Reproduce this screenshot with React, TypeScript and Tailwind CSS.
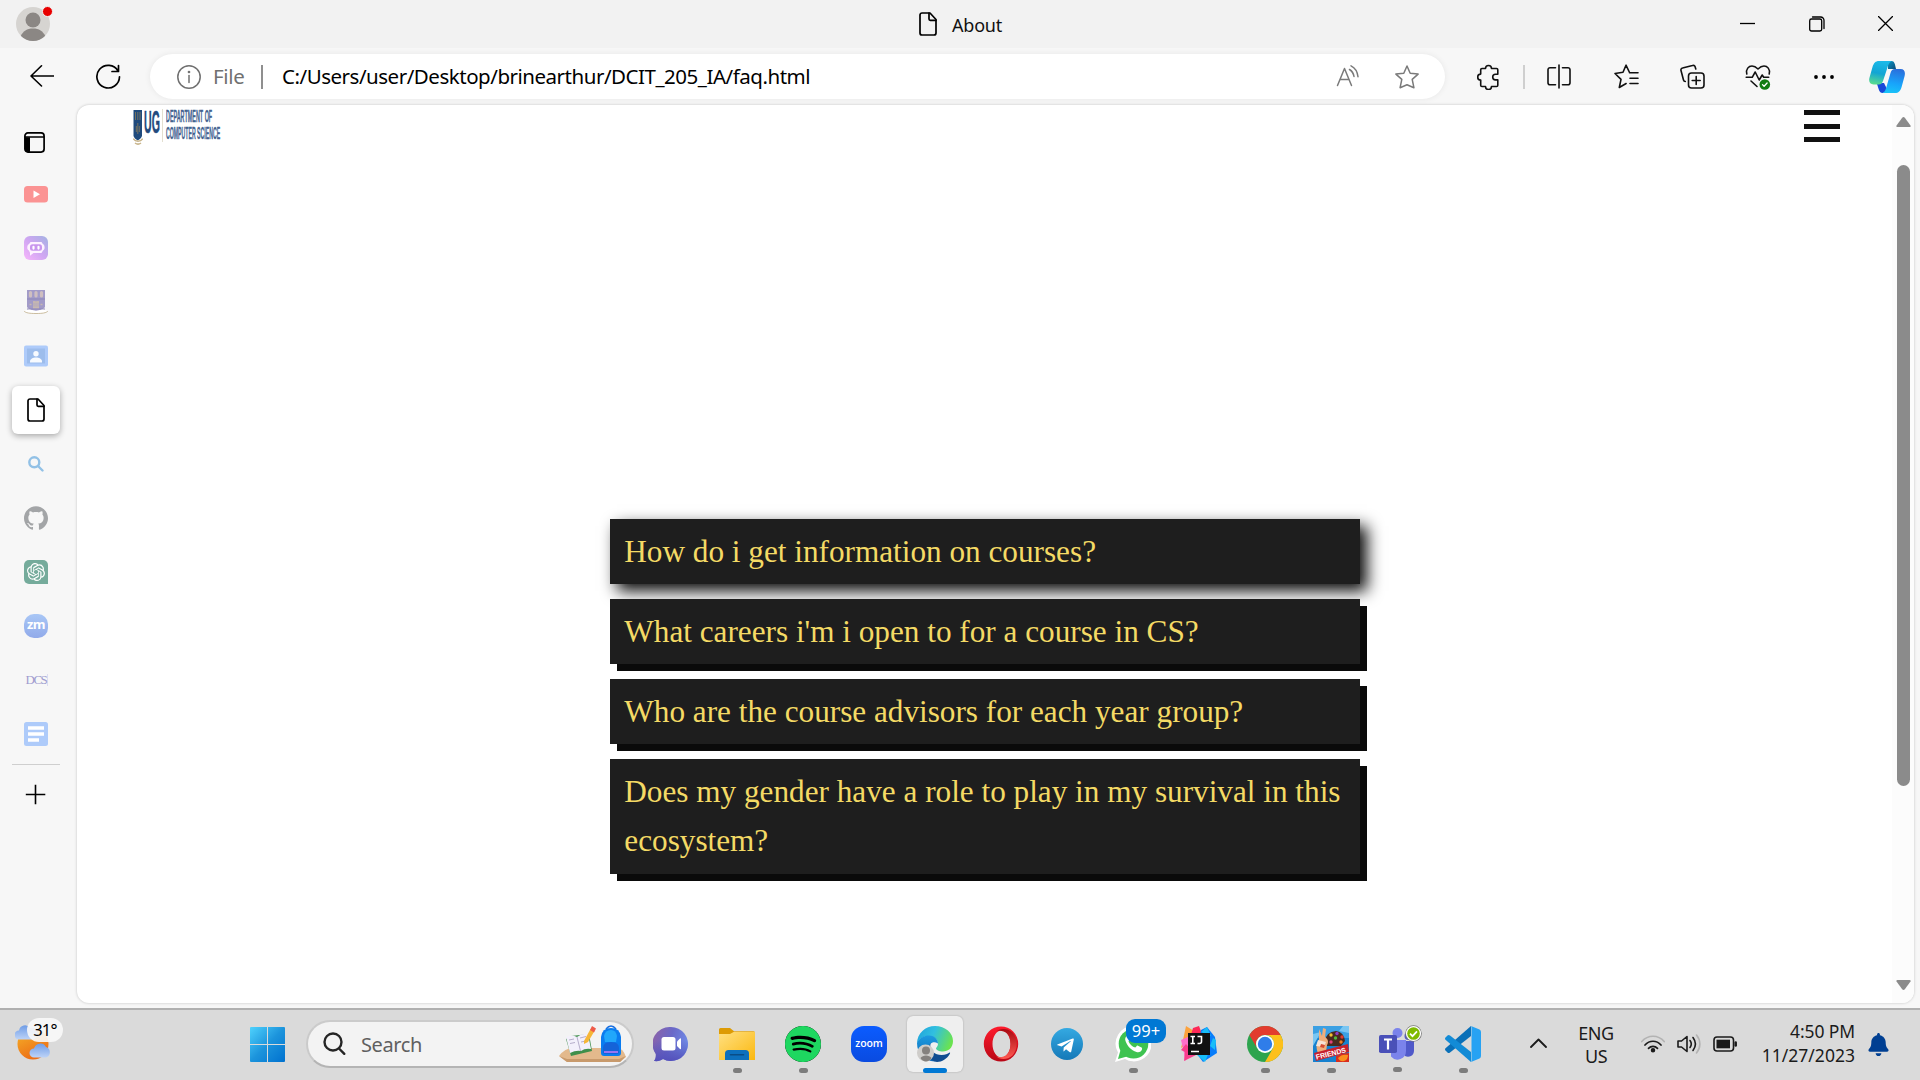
import type { ReactNode } from "react";
import { SiGithub, SiOpenai, SiSpotify } from "react-icons/si";
import { FaBell, FaTelegramPlane } from "react-icons/fa";

const ui = "font-['Noto_Sans','Open_Sans',sans-serif]";

type LineProps = { w: number; h: number; className?: string; sw?: number; children: ReactNode };

function Line({ w, h, className = "", sw = 1.6, children }: LineProps) {
  return (
    <svg
      width={w}
      height={h}
      viewBox={`0 0 ${w} ${h}`}
      fill="none"
      stroke="currentColor"
      strokeWidth={sw}
      strokeLinecap="round"
      strokeLinejoin="round"
      className={`block shrink-0 ${className}`}
    >
      {children}
    </svg>
  );
}

function DocIcon({ className = "" }: { className?: string }) {
  return (
    <Line w={18} h={24} className={className} sw={1.7}>
      <path d="M3 1h8l6 6.5V21a2 2 0 0 1-2 2H3a2 2 0 0 1-2-2V3a2 2 0 0 1 2-2z" />
      <path d="M10 1v6a1.3 1.3 0 0 0 1.3 1.3H17" />
    </Line>
  );
}

function TitleBar() {
  return (
    <header className="flex h-12 shrink-0 items-start bg-[#f2f2f2]">
      <div className="relative ml-4 mt-[7px] h-[34px] w-[34px]">
        <svg width="34" height="34" viewBox="0 0 34 34">
          <defs>
            <clipPath id="avatar">
              <circle cx="17" cy="17" r="17" />
            </clipPath>
          </defs>
          <circle cx="17" cy="17" r="17" fill="#d6d4d1" />
          <g clipPath="url(#avatar)" fill="#8b8784">
            <circle cx="17" cy="13" r="7.5" />
            <path d="M4.500 29.500C7 24 11 21.500 17 21.500s10 2.500 12.500 8L24 36H10z" />
          </g>
        </svg>
        <span className="absolute -top-[1px] left-[25.500px] h-[11px] w-[11px] rounded-full border border-[#f2f2f2] bg-[#e80000]" />
      </div>
      <DocIcon className="ml-[869px] mt-3" />
      <span className={`ml-[15px] mt-[12px] w-[60px] text-[18px] leading-[26px] tracking-[-0.2px] text-[#111] ${ui}`}>About</span>
      <Line w={15} h={15} sw={1.3} className="ml-[728px] mt-4 text-black">
        <path d="M0 7.500h15" strokeLinecap="butt" />
      </Line>
      <Line w={16} h={16} sw={1.3} className="ml-[54px] mt-[15.500px] text-black">
        <rect x=".7" y="3" width="12" height="12" rx="1.800" />
        <path d="M3.500 1h8A3.300 3.300 0 0 1 15 4.500v8" />
      </Line>
      <Line w={15} h={15} sw={1.3} className="ml-[53px] mt-4 text-black">
        <path d="M.5.5l14 14M14.500.5l-14 14" />
      </Line>
    </header>
  );
}

function Copilot() {
  return (
    <svg width="36" height="32" viewBox="0 0 36 32" className="block shrink-0">
      <defs>
        <linearGradient id="cpa" x1=".4" y1="0" x2=".2" y2="1">
          <stop offset="0" stopColor="#1bb9e8" />
          <stop offset=".5" stopColor="#12a5d4" />
          <stop offset="1" stopColor="#5ddf8b" />
        </linearGradient>
        <linearGradient id="cpb" x1=".6" y1="0" x2=".4" y2="1">
          <stop offset="0" stopColor="#2a6fdc" />
          <stop offset=".6" stopColor="#18a4fb" />
          <stop offset="1" stopColor="#19c2f8" />
        </linearGradient>
        <linearGradient id="cpc" x1="0" y1="0" x2="1" y2="1">
          <stop offset="0" stopColor="#0c96c4" />
          <stop offset="1" stopColor="#0b4a78" />
        </linearGradient>
      </defs>
      <path d="M19 0h3.500c3 0 3.500 3 4.500 8h-8z" fill="url(#cpc)" />
      <path d="M9 22h6l3 6c-1 3-2.500 4-4.500 4C10 32 9.500 27 8 23z" fill="#1748d8" />
      <path d="M10 0h13c-3 1-4 4-5 8l-4 12c-.8 2.500-2 3.500-4.500 3.500H4.500C1 23.500-.5 21 .4 17L3.500 6C4.800 2 6.500 0 10 0z" fill="url(#cpa)" />
      <path d="M26 8h5.500C35.500 8 36.500 11 35.600 15l-3 11c-1.300 4-3 6-6.600 6H13.500c2.500-1 3.500-4 4.500-8l3.500-12c.8-2.800 2-4 4.500-4z" fill="url(#cpb)" />
    </svg>
  );
}

function Toolbar() {
  return (
    <div className="flex h-[57px] shrink-0 items-start bg-[#f7f7f7] text-[#111]">
      <Line w={24} h={24} className="ml-[30px] mt-4 text-black">
        <path d="M1 12h22.500M11.500 1.800L1 12l10.500 10" />
      </Line>
      <Line w={26} h={26} className="ml-[42px] mt-[15.500px] text-black" sw={1.7}>
        <path d="M23.500 12.800A11.300 11.300 0 1 1 22 7M22.500 1.500v6h-6.500" />
      </Line>
      <div className="ml-[28px] mt-[6px] flex h-[45px] w-[1295px] items-start rounded-full bg-white shadow-[0_0_6px_rgba(0,0,0,0.07)]">
        <Line w={24} h={24} className="ml-[27px] mt-[10.500px] text-[#707070]" sw={1.5}>
          <circle cx="12" cy="12" r="11.200" />
          <path d="M12 10.500v7" />
          <circle cx="12" cy="7" r=".6" fill="currentColor" />
        </Line>
        <span className={`ml-[12px] mt-[8px] w-[34px] whitespace-nowrap text-[20.500px] leading-[28px] tracking-[-0.300px] text-[#717171] ${ui}`}>File</span>
        <span className="ml-[14px] mt-[11px] h-6 w-[2px] bg-[#8f8f8f]" />
        <span className={`ml-[19px] mt-[8px] w-[700px] whitespace-nowrap text-[20.500px] leading-[28px] tracking-[-0.475px] text-black ${ui}`}>
          C:/Users/user/Desktop/brinearthur/DCIT_205_IA/faq.html
        </span>
        <Line w={24} h={22} className="ml-[354px] mt-[11px] text-[#7a7a7a]" sw={1.5}>
          <path d="M1.500 20.500L8.500 3.500l7 17M4 14.500h9" />
          <path d="M13.500 4.500c2.500 1.500 4 4 4.500 7M15 .8c4 2 6.500 6 7 11" />
        </Line>
        <Line w={24} h={24} className="ml-[35px] mt-[11px] text-[#7a7a7a]" sw={1.5}>
          <path d="M12 1l3.200 7.200 7.900.9-5.900 5.300 1.700 8.300-6.900-3-6.900 3 1.700-8.300L.9 9.100l7.900-.9z" />
        </Line>
      </div>
      <Line w={22} h={26} className="ml-[31.500px] mt-4">
        <path d="M5 4.500h3.500a3 3 0 0 1 6 0h5c.8 0 1.300.5 1.300 1.300v4.500h-2.300a2.800 2.800 0 0 0 0 5.600h2.300v5.300c0 .8-.5 1.300-1.300 1.300h-5a3 3 0 0 1-6 0H5c-.8 0-1.300-.5-1.300-1.300v-5.100a3 3 0 0 1 0-6V5.800C3.700 5 4.200 4.500 5 4.500z" />
      </Line>
      <span className="ml-[24.500px] mt-[17px] h-6 w-[2px] bg-[#cfcfcf]" />
      <Line w={24} h={25} className="ml-[22px] mt-4">
        <path d="M8.500 3.700H3A2 2 0 0 0 1 5.700v13a2 2 0 0 0 2 2h5.500M15.500 3.700H21a2 2 0 0 1 2 2v13a2 2 0 0 1-2 2h-5.500M12 1v23" />
      </Line>
      <Line w={25} h={25} className="ml-[42.500px] mt-4">
        <path d="M15.300 8L12 1.200 9 8.300l-8 1.200 6 5.800L5.300 23.500l6.800-4M15.500 8.800H24M16 14.200h8M16 19.500h8" />
      </Line>
      <Line w={25} h={25} className="ml-[41px] mt-4">
        <rect x="8.500" y="9" width="15.500" height="15" rx="3" />
        <path d="M16.200 12.500v8M12.200 16.500h8M15.800 5l-.7-2.200A2 2 0 0 0 12.500 1.500L2.500 4A2 2 0 0 0 1 6.500l2.500 9.500a2 2 0 0 0 1.800 1.500" />
      </Line>
      <svg width="26" height="26" viewBox="0 0 26 26" className="ml-[40.500px] mt-4 block shrink-0" fill="none" stroke="#111" strokeWidth="1.600" strokeLinecap="round" strokeLinejoin="round">
        <path d="M1.800 10C.5 5 3.800 2 7 2c2.800 0 4.500 1.500 6 3 1.500-1.500 3.200-3 6-3 3.200 0 6.500 3 5.200 8M1.200 13.300h6l3-5.300 4 8 3-5 1.500 2.300h5M6 17l6 5.500" />
        <circle cx="19.800" cy="20.500" r="5.300" fill="#107c10" stroke="none" />
        <path d="M17.500 20.600l1.600 1.600 3-3.200" stroke="#fff" strokeWidth="1.300" />
      </svg>
      <svg width="20" height="4" viewBox="0 0 20 4" className="ml-[43px] mt-[27px] block shrink-0">
        <circle cx="2" cy="2" r="1.900" />
        <circle cx="10" cy="2" r="1.900" />
        <circle cx="18" cy="2" r="1.900" />
      </svg>
      <div className="ml-[35px] mt-[13px]">
        <Copilot />
      </div>
    </div>
  );
}

function Slot({ children }: { children: ReactNode }) {
  return <div className="flex h-[54px] w-12 shrink-0 items-center justify-center">{children}</div>;
}

function Sidebar() {
  return (
    <aside className="flex w-[77px] shrink-0 flex-col bg-[#f7f7f7] pl-3 pt-[11px]">
      <div className="flex h-[51px] w-[45px] items-center justify-center">
        <svg width="21" height="21" viewBox="0 0 21 21" className="mt-px block">
          <rect x=".9" y=".9" width="19.200" height="19.200" rx="3" fill="none" stroke="#000" strokeWidth="1.700" />
          <path d="M1 5.300h5V20H4a3 3 0 0 1-3-3z" />
          <path d="M1 5h19" stroke="#000" strokeWidth="1.500" />
        </svg>
      </div>
      <Slot>
        <svg width="24" height="17" viewBox="0 0 24 17">
          <rect width="24" height="16.500" rx="3.500" fill="#fb9393" />
          <path d="M9.500 4.500v7.500l6.500-3.750z" fill="#fff" />
        </svg>
      </Slot>
      <Slot>
        <svg width="24" height="24" viewBox="0 0 24 24">
          <defs>
            <linearGradient id="poe" x1="0" y1="1" x2="1" y2="0">
              <stop offset="0" stopColor="#f7b5fb" />
              <stop offset=".5" stopColor="#cfa6f2" />
              <stop offset="1" stopColor="#a3b3e2" />
            </linearGradient>
          </defs>
          <rect width="24" height="24" rx="6" fill="url(#poe)" />
          <path d="M6.500 6h11l1.500 2.300c2 .4 2.300 5.700 0 6.300L17.500 17H9.500L6 19.800v-3L4.900 14.600c-2.300-.6-2-5.900 0-6.300z" fill="#fdf2ff" />
          <rect x="6" y="8.200" width="12" height="6.600" rx="2.500" fill="#c996ee" />
          <path d="M9.500 10.800v1.800M14.500 10.800v1.800" stroke="#fff" strokeWidth="2.200" strokeLinecap="round" />
        </svg>
      </Slot>
      <Slot>
        <svg width="24" height="24" viewBox="0 0 24 24">
          <path d="M3 0h18v17c-2 3-6 3-9 4-3-1-7-1-9-4z" fill="#a29bc8" />
          <path d="M3 9h18M3 19h18" stroke="#8e87b8" strokeWidth="1" />
          <path d="M6.500 2.500v3.500M12 2.500v3.500M17.500 2.500v3.500" stroke="#cfbfc0" strokeWidth="3.200" strokeLinecap="round" />
          <path d="M9 12h6M5.500 14.500h2M16.500 14.500h2M9 17.500h6M10 11v7M14 11v7M12 12v6" stroke="#c8b9b0" strokeWidth="1.400" />
          <path d="M.5 20.500c3.500 0 4.500-1 6.500-.5 3 1 7 1 10 0 2-.5 3 .5 6.500.5l-2 2c-6 1.500-13 1.500-19 0z" fill="#fff" />
          <path d="M0 21c1.500 2 6 2.500 12 2.500S22.500 23 24 21" fill="none" stroke="#cbbd9f" strokeWidth="1" />
        </svg>
      </Slot>
      <Slot>
        <svg width="24" height="22" viewBox="0 0 24 22">
          <rect width="24" height="21" y=".5" rx="2" fill="#aecbfa" />
          <rect x="3" y="3.500" width="18" height="15" fill="#9dbdec" />
          <circle cx="12" cy="8.800" r="2.700" fill="#f8fbff" />
          <path d="M6 17.500v-1c0-2.500 3-4 6-4s6 1.500 6 4v1z" fill="#f8fbff" />
        </svg>
      </Slot>
      <div className="my-[3px] flex h-12 w-12 shrink-0 items-center justify-center rounded-md bg-white text-black shadow-[0_2px_6px_rgba(0,0,0,0.32)]">
        <DocIcon />
      </div>
      <Slot>
        <svg width="16" height="16" viewBox="0 0 16 16" fill="none" stroke="#92c1e6" strokeWidth="2.400" strokeLinecap="round">
          <circle cx="6.300" cy="6.300" r="5" />
          <path d="M10 10l4.500 4.500" />
        </svg>
      </Slot>
      <Slot>
        <SiGithub size={24} color="#a3a5a7" />
      </Slot>
      <Slot>
        <div className="flex h-6 w-6 items-center justify-center rounded-[5px] rounded-br-none bg-[#75ab9b]">
          <SiOpenai size={18} color="#fff" />
        </div>
      </Slot>
      <Slot>
        <div className="flex h-6 w-6 items-center justify-center rounded-[10px] bg-linear-to-b from-[#a9c7f6] to-[#91aaea]">
          <span className="pb-[3px] font-['Open_Sans',sans-serif] text-[13px] leading-none font-bold tracking-[-0.500px] text-white">zm</span>
        </div>
      </Slot>
      <Slot>
        <div className="ml-px flex items-center border-r border-[#dedcf0] font-['Liberation_Serif',serif] text-[13px] leading-[12px] tracking-[-1.500px] text-[#9f9ccf]">
          <span className="w-[21px]">DCS</span>
        </div>
      </Slot>
      <Slot>
        <svg width="24" height="24" viewBox="0 0 24 24">
          <rect width="24" height="24" rx="2.500" fill="#aecbfa" />
          <path d="M4 4.200h16v3.600H4zM4 10.200h16v3.600H4zM4 16.200h11v3.600H4z" fill="#fff" />
        </svg>
      </Slot>
      <div className="mt-[3px] h-px w-12 bg-[#cfcfcf]" />
      <Line w={21} h={21} sw={1.6} className="ml-[13px] mt-[19px] text-black">
        <path d="M10.500.8v19.500M.8 10.500h19.500" strokeLinecap="butt" />
      </Line>
    </aside>
  );
}

function DepartmentLogo() {
  return (
    <div className="flex h-[37px] items-start font-['Liberation_Sans',sans-serif] font-bold">
      <svg width="10" height="37" viewBox="0 0 10 37" className="block shrink-0">
        <path d="M.5 2h8.500v26c-1 3-3 3.500-4.200 4.500C3.500 31.500 1.500 31 .5 28z" fill="#1f4a7c" />
        <path d="M2.500 4v8M4.800 4v8M7 4v8M4.800 15v11M3.300 18v6M6.300 18v6" stroke="#8b7c58" strokeWidth=".8" />
        <path d="M.3 30.500C2 34 8 34 9.700 30.500M2 35c2 1.500 4 1.500 6 0" stroke="#c8b48a" strokeWidth="1.500" fill="none" />
      </svg>
      <div className="mt-[2px] w-[17px] pl-px">
        <div className="w-max origin-top-left scale-x-[0.330] text-[32px] leading-[25px] text-[#234a7d] [-webkit-text-stroke:0.500px_#234a7d]">UG</div>
      </div>
      <div className="ml-[2px] mt-px h-[33px] w-px bg-[#e3dfd0]" />
      <div className="ml-[3px] mt-[2px] w-[56px] whitespace-nowrap text-[16px] text-[#42628f]">
        <div className="h-[17px] w-max origin-top-left scale-x-[0.338] leading-[14px] [-webkit-text-stroke:0.300px_#42628f]">DEPARTMENT OF</div>
        <div className="h-[17px] w-max origin-top-left scale-x-[0.324] leading-[14px] [-webkit-text-stroke:0.300px_#42628f]">COMPUTER SCIENCE</div>
      </div>
    </div>
  );
}

const questions = [
  "How do i get information on courses?",
  "What careers i'm i open to for a course in CS?",
  "Who are the course advisors for each year group?",
  "Does my gender have a role to play in my survival in this ecosystem?",
];

function FaqPage() {
  return (
    <main className="flex h-[898px] w-[1837px] shrink-0 overflow-hidden rounded-xl bg-white shadow-[0_0_3px_rgba(0,0,0,0.22)]">
      <div className="flex flex-1 flex-col">
        <div className="flex h-[40px] items-start justify-between pl-[56px] pr-[52px] pt-[3px]">
          <DepartmentLogo />
          <div className="mt-[2px] flex flex-col gap-[8.500px]">
            <span className="h-[5px] w-9 bg-[#111]" />
            <span className="h-[5px] w-9 bg-[#111]" />
            <span className="h-[5px] w-9 bg-[#111]" />
          </div>
        </div>
        <ul className="ml-[533px] mt-[374px] flex w-[750px] flex-col gap-[15px] font-['Liberation_Serif',serif] text-[31.250px] leading-[49px] tracking-[-0.012px] text-[#f4da65]">
          {questions.map((q, i) => (
            <li
              key={q}
              className={`relative bg-[#1e1e1e] pb-[7px] pl-[14.300px] pr-[10px] pt-[8.400px] ${
                i === 0 ? "h-[65px] shadow-[7px_7px_15px_#0a0a0a]" : i === 3 ? "h-[115px] shadow-[7px_7px_0_#0a0a0a]" : "h-[65px] shadow-[7px_7px_0_#0a0a0a]"
              }`}
            >
              {q}
            </li>
          ))}
        </ul>
      </div>
      <div className="flex w-[22px] flex-col bg-[#fcfcfc] pl-1">
        <svg width="15" height="10" viewBox="0 0 15 10" className="mt-3 block" fill="#8b8b8b">
          <path d="M6 1Q7.500-.8 9 1l5.500 7.500Q15 10 13.500 10h-12Q0 10 .5 8.500z" />
        </svg>
        <div className="ml-px mt-[38px] h-[621px] w-[13px] rounded-full bg-[#8b8b8b]" />
        <svg width="15" height="10" viewBox="0 0 15 10" className="mt-[194px] block" fill="#8b8b8b">
          <path d="M6 9Q7.500 10.800 9 9l5.500-7.500Q15 0 13.500 0h-12Q0 0 .5 1.500z" />
        </svg>
      </div>
    </main>
  );
}

function AppSlot({ children, running, active }: { children: ReactNode; running?: boolean; active?: boolean }) {
  return (
    <div className="flex w-[66px] shrink-0 justify-center">
      <div
        className={`flex h-14 w-14 flex-col items-center rounded-md pt-[10px] ${
          active ? "bg-[#efefef] shadow-[0_0_2px_rgba(0,0,0,0.25)]" : ""
        }`}
      >
        <div className="relative flex h-9 w-9 items-center justify-center">{children}</div>
        {active && <span className="mt-[6px] h-[5px] w-6 shrink-0 rounded-full bg-[#0078d4]" />}
        {running && <span className="mt-[6px] h-[5px] w-[9px] shrink-0 rounded-full bg-[#7c7c7c]" />}
      </div>
    </div>
  );
}

function TeamsChatIcon() {
  return (
    <svg width="36" height="36" viewBox="0 0 36 36">
      <defs>
        <linearGradient id="chat" x1="0" y1=".2" x2="1" y2=".5">
          <stop offset="0" stopColor="#8b62a8" />
          <stop offset=".5" stopColor="#6a68c8" />
          <stop offset="1" stopColor="#6f8ce8" />
        </linearGradient>
        <linearGradient id="chat2" x1="0" y1="0" x2="0" y2="1">
          <stop offset=".4" stopColor="#5152b8" stopOpacity="0" />
          <stop offset="1" stopColor="#5450bb" />
        </linearGradient>
      </defs>
      <path d="M18 1a17 17 0 1 1-8 32c-2 1.500-5 2.500-9 2 1.500-2 2-4 1.800-7A17 17 0 0 1 18 1z" fill="url(#chat)" />
      <path d="M18 1a17 17 0 1 1-8 32c-2 1.500-5 2.500-9 2 1.500-2 2-4 1.800-7A17 17 0 0 1 18 1z" fill="url(#chat2)" />
      <rect x="8.500" y="11" width="14" height="13.500" rx="2.500" fill="#fff" />
      <path d="M24 15.500l3-3q1-.5 1 .5v9.500q0 1-1 .5l-3-3z" fill="#fff" />
    </svg>
  );
}

function ExplorerIcon() {
  return (
    <svg width="36" height="36" viewBox="0 0 36 36">
      <defs>
        <linearGradient id="fold" x1="0" y1="0" x2="1" y2="1">
          <stop offset="0" stopColor="#ffe082" />
          <stop offset="1" stopColor="#fbb80f" />
        </linearGradient>
      </defs>
      <path d="M0 3.500Q0 2 1.500 2H11l4 3.200h19.500Q36 5.200 36 7v5H0z" fill="#dd9b05" />
      <path d="M0 8h11l4-2.300h21V34H0z" fill="url(#fold)" />
      <path d="M6 34v-6.500Q6 24 9.500 24h17q3.500 0 3.500 3.500V34z" fill="#0d70bd" />
      <path d="M11.500 28.800h13" stroke="#0a4d86" strokeWidth="1.600" strokeLinecap="round" />
    </svg>
  );
}

function EdgeIcon() {
  return (
    <svg width="36" height="36" viewBox="0 0 36 36">
      <defs>
        <linearGradient id="eg1" x1="0" y1=".2" x2="1" y2=".5">
          <stop offset="0" stopColor="#20a5dc" />
          <stop offset=".45" stopColor="#31bfe0" />
          <stop offset="1" stopColor="#6be34f" />
        </linearGradient>
        <linearGradient id="eg2" x1="0" y1="0" x2="0" y2="1">
          <stop offset="0" stopColor="#1c9be0" />
          <stop offset="1" stopColor="#0f66b5" />
        </linearGradient>
      </defs>
      <path d="M0 18C0 7 8.500 0 18 0c10.500 0 18 7 18 15 0 7-5 10.500-10 10.500-4 0-7-1.500-7-3 0-1 2-2 2-4.500C21 13 17 10 12 10 6 10 1.500 13 0 18z" fill="url(#eg1)" />
      <path d="M0 17C2 12 7 9.500 12 9.500c5 0 9 3.500 9 8-5-3-9 0-9 5.500 0 6 5 11 11 11.700C11 38 0 30 0 17z" fill="url(#eg2)" />
      <path d="M13.500 17c-1.500 8 4.500 12 11 12 4 0 6-1 8-2.500q1 0 .5 1C30 33 25 36 20 36c-7-1-11-8-9-14z" fill="#104c91" />
      <circle cx="8.500" cy="27" r="8.500" fill="#cfcdca" />
      <circle cx="9" cy="24.500" r="4" fill="#85817e" />
      <path d="M3.500 32c2-3.500 9-3.500 11 0-2 4.500-9 4.500-11 0z" fill="#85817e" />
    </svg>
  );
}

function OperaIcon() {
  return (
    <svg width="36" height="36" viewBox="0 0 36 36">
      <defs>
        <linearGradient id="op1" x1="0" y1="0" x2="0" y2="1">
          <stop offset="0" stopColor="#ff1b2d" />
          <stop offset="1" stopColor="#b80716" />
        </linearGradient>
        <linearGradient id="op2" x1="0" y1="0" x2="0" y2="1">
          <stop offset="0" stopColor="#a80a12" />
          <stop offset="1" stopColor="#ff5a52" />
        </linearGradient>
      </defs>
      <path fillRule="evenodd" d="M18 .5a17.200 17.500 0 1 1 0 35 17.200 17.500 0 1 1 0-35zM18.500 4.500c-5 0-9 6-9 13.500s4 13.500 9 13.500 9-6 9-13.500-4-13.500-9-13.500z" fill="url(#op1)" />
      <path d="M13 6c3-3.500 11-4.500 16.500.5a17.200 17.500 0 0 1 0 23C24 34.500 16 33.500 13 30c3 2.500 14.500 2 14.500-12S16 3.500 13 6z" fill="url(#op2)" />
    </svg>
  );
}

function IntellijIcon() {
  return (
    <svg width="36" height="36" viewBox="0 0 36 36">
      <path d="M5 0l8 5-5 12-8 5 2-8z" fill="#fca23c" />
      <path d="M12 2l6-2 3 8-12 4z" fill="#fe2857" />
      <path d="M0 14l9-4v18l-5 7-1-8z" fill="#fd6fc8" />
      <path d="M5 18L0 24l4 2-1 9 12-6z" fill="#f83d8a" />
      <path d="M20 4l6-3 8 10 2 16-14 9-6-8z" fill="#087cfa" />
      <path d="M20 6l6-5 4 9zM15 28l9 8 4-10zM32 12l3 2-1 10-5-4z" fill="#18bdf8" />
      <rect x="7" y="7" width="22" height="22" fill="#111" />
      <path d="M9.500 10.500h4.500M11.800 10.500v7M9.500 17.500h4.500M16.500 10.500h4v5q0 2-2 2h-2M10 25.500h8" stroke="#fff" strokeWidth="1.600" fill="none" />
    </svg>
  );
}

function ChromeIcon() {
  return (
    <svg width="36" height="36" viewBox="0 0 36 36">
      <circle cx="18" cy="18" r="18" fill="#2da44e" />
      <path d="M2.400 9A18 18 0 0 1 33.600 9H18a9 9 0 0 0-7.800 13.500z" fill="#e23b2e" />
      <path d="M33.600 9A18 18 0 0 1 18 36l7.800-13.500A9 9 0 0 0 18 9z" fill="#fdc01c" />
      <circle cx="18" cy="18" r="9" fill="#fff" />
      <circle cx="18" cy="18" r="7.200" fill="#2f7de9" />
    </svg>
  );
}

function CandyIcon() {
  return (
    <svg width="36" height="36" viewBox="0 0 36 36">
      <rect width="36" height="36" fill="#1681cf" />
      <path d="M0 0h36v12H0z" fill="#3ba0e3" />
      <path d="M0 8l8-2-8 14zM30 0l-4 5 10 2V0z" fill="#79c6f2" />
      <path d="M12 15q1-9 11-10 8 1 9 10l-4 5H14z" fill="#4a2a1e" />
      <circle cx="18" cy="9" r="1.700" fill="#f1c232" />
      <circle cx="24" cy="7.500" r="1.700" fill="#8e3fc4" />
      <circle cx="29" cy="11" r="1.700" fill="#e03a2f" />
      <circle cx="22.500" cy="12" r="1.700" fill="#52b83b" />
      <circle cx="28" cy="16" r="1.700" fill="#f07b22" />
      <circle cx="18" cy="16" r="1.700" fill="#e0407a" />
      <path d="M6 3l3 7 1-8 3 1-1 8c3 2 4 5 2 8l-1 7-8 1c-2-5-2-9 1-12z" fill="#efae7b" />
      <path d="M5 14l8 2-2 5-8-1z" fill="#f6e3d5" />
      <path d="M8 18l4 1-1 3-4-1z" fill="#d64b32" />
      <path d="M1 27l34-9 1 8-33 9z" fill="#c8202c" />
      <text x="3.500" y="33.500" transform="rotate(-14 3.500 33.500)" fontFamily="Liberation Sans" fontSize="7" fontWeight="700" fill="#fff">FRIENDS</text>
      <path d="M23 30q6-3 13-3v9H23z" fill="#d92d1d" />
      <path d="M25 32q4-4.500 10-3 0 5-4 6-4 1-6-3z" fill="#f98f1e" />
    </svg>
  );
}

function TeamsIcon() {
  return (
    <svg width="46" height="40" viewBox="0 0 46 40" className="absolute left-0 -top-[2px] max-w-none">
      <circle cx="29.500" cy="12" r="4" fill="#5059c9" />
      <path d="M24 17h11v10a6 6 0 0 1-9 5z" fill="#5059c9" />
      <circle cx="18.500" cy="9" r="5" fill="#7b83eb" />
      <path d="M12 16h15v11a8.500 8.500 0 0 1-15 5.500z" fill="#7b83eb" />
      <rect x="0" y="11" width="18" height="18" rx="1.800" fill="#4a50b8" />
      <path d="M5 15.500h8M9 15.500v10" stroke="#fff" strokeWidth="2.200" />
      <circle cx="34.500" cy="9.500" r="8.300" fill="#777" />
      <circle cx="34.500" cy="9.500" r="7.600" fill="#fff" />
      <circle cx="34.500" cy="9.500" r="6.300" fill="#7fba00" />
      <path d="M31 9.700l2.500 2.500 4.500-4.800" stroke="#fff" strokeWidth="1.700" fill="none" />
    </svg>
  );
}

function CodeIcon() {
  return (
    <svg width="36" height="36" viewBox="0 0 36 36">
      <path d="M26 0v10L5 26.500q-1.500 1-2.500 0l-2-2q-1-1.200 0-2.300z" fill="#0a70b8" />
      <path d="M26 36V26L5 9.500q-1.500-1-2.500 0l-2 2q-1 1.200 0 2.300z" fill="#128bd6" />
      <path d="M26 0l8.500 3.500Q36 4.200 36 6v24q0 1.800-1.500 2.500L26 36q.5-.5.500-2V2q0-1.500-.5-2z" fill="#27a2f3" />
    </svg>
  );
}

function WeatherWidget() {
  return (
    <div className="relative ml-[15px] mt-[10px] h-[44px] w-[50px]">
      <svg width="50" height="44" viewBox="0 0 50 44">
        <defs>
          <linearGradient id="sun" x1="0" y1="0" x2=".5" y2="1">
            <stop offset="0" stopColor="#f6b52a" />
            <stop offset="1" stopColor="#ec6d15" />
          </linearGradient>
          <linearGradient id="cloud" x1="0" y1="0" x2="0" y2="1">
            <stop offset="0" stopColor="#6f9ce6" />
            <stop offset="1" stopColor="#bdd3f7" />
          </linearGradient>
        </defs>
        <circle cx="18" cy="26" r="15.500" fill="url(#sun)" />
        <path d="M4 21.500a4.500 4.500 0 0 1 0-9A6 6 0 0 1 15 10a5 5 0 0 1 3 11.500z" fill="url(#cloud)" />
        <path d="M19 39.500a4.500 4.500 0 0 1 0-9 6.500 6.500 0 0 1 12-1.500 5.500 5.500 0 0 1 0 10.500z" fill="url(#cloud)" />
      </svg>
      <span className={`absolute left-[12px] top-0 flex h-6 w-[36px] items-center justify-center rounded-full bg-[#f8f8f8]/90 text-[16.500px] tracking-[-0.800px] text-black ${ui}`}>31°</span>
    </div>
  );
}

function SearchBox() {
  return (
    <div className="ml-[21px] mt-[12px] flex h-[48px] w-[328px] items-center rounded-full border-2 border-b-[#b4b4b4] border-l-[#cacaca] border-r-[#cacaca] border-t-[#cbcbcb] bg-[#f3f3f3]">
      <svg width="23" height="24" viewBox="0 0 23 24" className="ml-[15px] block" fill="none" stroke="#252525" strokeWidth="2.400" strokeLinecap="round">
        <circle cx="10" cy="10" r="8.500" />
        <path d="M16 16.500l5.300 5.300" />
      </svg>
      <span className={`ml-[15px] mt-px w-[100px] text-[20px] leading-[26px] tracking-[-0.400px] text-[#5f5f5f] ${ui}`}>Search</span>
      <svg width="68" height="38" viewBox="0 0 68 38" className="ml-[98px] block">
        <path d="M0 31q6-8 14-8h44q6 0 9 9l-6 5H8z" fill="#e3b98c" />
        <path d="M0 31l8 3h52l7-3-6 6H8z" fill="#c89a6c" />
        <path d="M7 14l5-3 18-2 3 17-21 5z" fill="#3f8f4b" />
        <path d="M7 12q6-3 11 0 5-4 11-3l3 15q-6-1-10 2-5-1-11 2z" fill="#f3f0fb" />
        <path d="M18 12l3.500 14M10 15l5-1M11 18.500l5-1M21 13l6-1.500M22 17l5-1" stroke="#b6aecb" strokeWidth="1" />
        <path d="M25 16l6.500-12 4 2-6.500 11-4 2z" fill="#f6b637" />
        <path d="M31 5l2-4 4 2.500-2 4z" fill="#ef5b4a" />
        <path d="M47 4q5-6 10 0" fill="none" stroke="#1a6fe0" strokeWidth="1.500" />
        <path d="M42 12q1-9 10-9t10 9v16q0 3-3 3H45q-3 0-3-3z" fill="#0a7cf0" />
        <path d="M45 11q1-6 7-6 5 0 6 6l-1 6H46z" fill="#21a7fb" />
        <path d="M44 23q0-6 8-6t8 6v4q0 2-2 2H46q-2 0-2-2z" fill="#1563d8" />
        <path d="M45 27h14" stroke="#a678f5" strokeWidth="1.800" />
      </svg>
    </div>
  );
}

function Tray() {
  return (
    <div className={`flex text-[#1b1b1b] ${ui}`}>
      <Line w={17} h={10} sw={1.8} className="ml-[34px] mt-[30px]">
        <path d="M1 9l7.500-7.500L16 9" />
      </Line>
      <div className="ml-[19px] mt-[14px] w-[60px] text-center text-[18px] leading-[23px] tracking-[-0.500px]">
        <div>ENG</div>
        <div>US</div>
      </div>
      <Line w={24} h={18} sw={1.7} className="ml-[15px] mt-[27px]">
        <path d="M.8 6.500C7-.5 17-.5 23.200 6.500" stroke="#b3b3b3" />
        <path d="M4 10c4.500-5 11.500-5 16 0M7.500 13.300c2.500-2.700 6.500-2.700 9 0" />
        <circle cx="12" cy="15.300" r="1.400" fill="currentColor" />
      </Line>
      <Line w={25} h={20} sw={1.6} className="ml-[12px] mt-[26px]">
        <path d="M1 7v6h3.500L10 17.500v-15L4.500 7z" />
        <path d="M13 6.500c1.500 2 1.500 5 0 7M16 3.500c3 4 3 9 0 13" />
        <path d="M19.500 1c4.500 5.500 4.500 12.500 0 18" stroke="#b3b3b3" />
      </Line>
      <Line w={25} h={16} sw={1.6} className="ml-[11px] mt-[28px]">
        <rect x="1" y="1" width="19.500" height="14" rx="3" />
        <rect x="3.500" y="3.700" width="13.500" height="8.600" fill="currentColor" stroke="none" />
        <path d="M22.700 6.500v3" strokeWidth="2.500" />
      </Line>
      <div className="mt-[11px] w-[117px] text-right text-[17.500px] leading-[24px]">
        <div className="tracking-[-0.100px]">4:50 PM</div>
        <div className="tracking-[0.020px]">11/27/2023</div>
      </div>
      <FaBell size={23} color="#003f92" className="ml-[12px] mt-[25px]" />
    </div>
  );
}

function Taskbar() {
  return (
    <footer className="flex h-[72px] shrink-0 items-start border-t-2 border-[#b0b0b0] bg-[#dadada]">
      <div className="-mt-[2px] flex h-[72px] items-start">
        <WeatherWidget />
        <svg width="35" height="35" viewBox="0 0 35 35" className="ml-[185px] mt-[19px] block">
          <defs>
            <linearGradient id="win" x1="0" y1="0" x2="1" y2="1">
              <stop offset="0" stopColor="#4fd2fd" />
              <stop offset=".5" stopColor="#1c94dc" />
              <stop offset="1" stopColor="#0071cf" />
            </linearGradient>
          </defs>
          <path d="M1 0h16v17H0V1q0-1 1-1zM18 0h16q1 0 1 1v16H18zM0 18h17v17H1q-1 0-1-1zM18 18h17v16q0 1-1 1H18z" fill="url(#win)" />
        </svg>
        <SearchBox />
        <div className="ml-[4px] mt-2 flex">
          <AppSlot><TeamsChatIcon /></AppSlot>
          <AppSlot running><ExplorerIcon /></AppSlot>
          <AppSlot running>
            <div className="flex h-9 w-9 items-center justify-center rounded-full bg-black">
              <SiSpotify size={36} color="#1ed760" />
            </div>
          </AppSlot>
          <AppSlot>
            <div className="flex h-9 w-9 items-center justify-center rounded-[13px] bg-linear-to-b from-[#0b5cff] to-[#0a4be0]">
              <span className="pb-[2px] font-['Open_Sans',sans-serif] text-[10.500px] leading-none font-semibold tracking-[-0.100px] text-white">zoom</span>
            </div>
          </AppSlot>
          <AppSlot active><EdgeIcon /></AppSlot>
          <AppSlot><OperaIcon /></AppSlot>
          <AppSlot>
            <div className="flex h-8 w-8 items-center justify-center rounded-full bg-linear-to-b from-[#34a9e2] to-[#1579b8]">
              <FaTelegramPlane size={19} color="#fff" className="mr-[3px] mt-[2px]" />
            </div>
          </AppSlot>
          <AppSlot running>
            <div className="relative flex h-9 w-9 items-center justify-center">
              <svg width="36" height="36" viewBox="0 0 36 36">
                <path d="M18.500 0a17.700 17.700 0 1 1-8.500 33L0 36l3-9.500A17.700 17.700 0 0 1 18.500 0z" fill="#fff" />
                <circle cx="18.500" cy="17.700" r="14.800" fill="#3fc351" />
                <path d="M3 33l2.500-9 6.500 6.500z" fill="#3fc351" />
                <path d="M12.500 9.500c-2 1-2.800 3-2 5.500 1.700 5 5.500 9 11 11 2.500.8 5-.5 5.500-2.500.3-1.500 0-1.800-1-2.300l-3-1.500c-.8-.3-1.200 0-1.700.7l-1 1.200c-3-1-5.500-3.500-6.800-6.200l1.200-1.500c.3-.5.2-.9 0-1.400l-1.200-2.800c-.2-.3-.6-.4-1-.2z" fill="#fff" />
              </svg>
              <span className={`absolute -top-[7px] left-[11px] flex h-6 w-10 items-center justify-center rounded-[9px] bg-[#0078d4] text-[16.500px] leading-none text-white ${ui}`}>99+</span>
            </div>
          </AppSlot>
          <AppSlot><IntellijIcon /></AppSlot>
          <AppSlot running><ChromeIcon /></AppSlot>
          <AppSlot running><CandyIcon /></AppSlot>
          <AppSlot running><TeamsIcon /></AppSlot>
          <AppSlot running><CodeIcon /></AppSlot>
        </div>
        <Tray />
      </div>
    </footer>
  );
}

export default function App() {
  return (
    <div className="flex h-[1080px] w-[1920px] flex-col overflow-hidden bg-[#f7f7f7]">
      <TitleBar />
      <Toolbar />
      <div className="flex h-[903px] shrink-0">
        <Sidebar />
        <FaqPage />
      </div>
      <Taskbar />
    </div>
  );
}
